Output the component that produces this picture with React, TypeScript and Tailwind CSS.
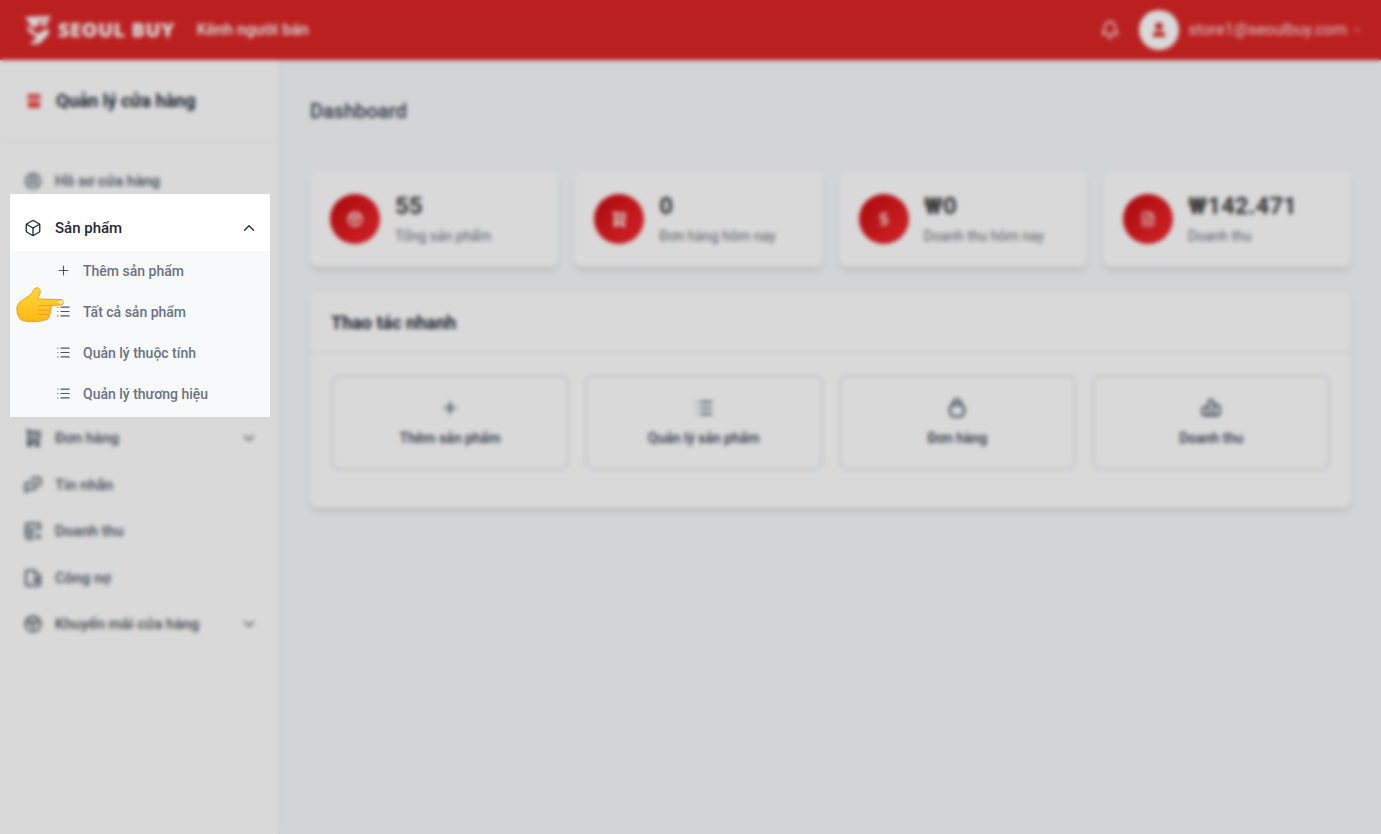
import { Bell, Box, ChevronDown, ChevronUp, CircleUserRound, DollarSign, FileText, List, Plus, User } from "lucide-react";
import type { ComponentType } from "react";

type IconType = ComponentType<{ size?: number; strokeWidth?: number; className?: string }>;

// icons that lucide doesn't have in this shape
const CartBox: IconType = ({ size = 18, className }) => (
  <svg width={size} height={size} viewBox="0 0 18 18" fill="none" stroke="currentColor" strokeWidth="2" className={className}>
    <path d="M2 1.5 H4.5 V13 H15 M4.5 3 H15.5 V9.5 H4.5" />
    <path d="M8 3 V7 M12 3 V7" strokeWidth="1.5" />
    <circle cx="5.5" cy="15.5" r="1.5" fill="currentColor" />
    <circle cx="13.5" cy="15.5" r="1.5" fill="currentColor" />
  </svg>
);

const Chats: IconType = ({ size = 18, className }) => (
  <svg width={size} height={size} viewBox="0 0 18 18" fill="none" stroke="currentColor" strokeWidth="1.8" strokeLinejoin="round" className={className}>
    <path d="M7 2 H16.5 V9 H14" />
    <path d="M1.5 7 H11.5 V13 H5 L1.5 16 Z" />
  </svg>
);

const Sheet: IconType = ({ size = 18, className }) => (
  <svg width={size} height={size} viewBox="0 0 18 18" fill="none" stroke="currentColor" strokeWidth="1.9" strokeLinejoin="round" className={className}>
    <path d="M16 8 V3 Q16 1.5 14.5 1.5 H3.5 Q2 1.5 2 3 V15 Q2 16.5 3.5 16.5 H10" />
    <path d="M2 6.5 H16 M2 11 H11 M7 6.5 V16" strokeWidth="1.5" />
    <rect x="12.5" y="12.5" width="4" height="4" fill="currentColor" stroke="none" />
  </svg>
);

const WalletBox: IconType = ({ size = 18, className }) => (
  <svg width={size} height={size} viewBox="0 0 18 18" fill="none" stroke="currentColor" strokeWidth="2" strokeLinejoin="round" className={className}>
    <path d="M11 1.5 H3.5 Q2 1.5 2 3 V15 Q2 16.5 3.5 16.5 H14.5 Q16 16.5 16 15 V7 Q16 5.5 14.5 5.5 H11 Z" />
    <rect x="9.5" y="9" width="5" height="4" fill="currentColor" stroke="none" />
  </svg>
);

const PromoGlobe: IconType = ({ size = 18, className }) => (
  <svg width={size} height={size} viewBox="0 0 18 18" fill="none" stroke="currentColor" strokeWidth="1.9" className={className}>
    <circle cx="9" cy="9" r="7.5" />
    <path d="M2 7 L9 10 L16 6 M9 10 V16.5 M5 3 L9 10 L13 2.5" strokeWidth="1.4" />
  </svg>
);

const StoreFilled: IconType = ({ size = 16, className }) => (
  <svg width={size} height={size} viewBox="0 0 16 16" fill="currentColor" className={className}>
    <path d="M2 1 H14 L15 5 Q15 7 13 7 H3 Q1 7 1 5 Z" />
    <path d="M2 8.5 H14 V15 H2 Z" />
    <path d="M1 5.5 H15" stroke="#fff" strokeWidth="0.8" />
  </svg>
);

const Bag: IconType = ({ size = 20, className }) => (
  <svg width={size} height={size} viewBox="0 0 20 20" fill="none" stroke="currentColor" strokeWidth="2" strokeLinejoin="round" className={className}>
    <path d="M6 6 Q10 8.5 14 6 L16.5 9 Q17.5 10.5 17 14 Q16.5 18.5 13 18.5 H7 Q3.5 18.5 3 14 Q2.5 10.5 3.5 9 Z" />
    <path d="M6.5 6 Q6.5 1.5 10 1.5 Q13.5 1.5 13.5 6" />
  </svg>
);

const Revenue: IconType = ({ size = 22, className }) => (
  <svg width={size} height={size} viewBox="0 0 22 22" fill="none" stroke="currentColor" strokeWidth="2" strokeLinejoin="round" className={className}>
    <path d="M8 10 V5 Q8 2 11 2 Q14 2 14 5 V8 H18 Q20.5 8 20.5 10.5 V17 Q20.5 19 18.5 19 H3.5 Q1.5 19 1.5 17 V12.5 Q1.5 10 4 10 Z" />
    <path d="M8 10 V19 M14 8 V19" />
  </svg>
);

const subItems = [
  { label: "Thêm sản phẩm", icon: Plus },
  { label: "Tất cả sản phẩm", icon: List },
  { label: "Quản lý thuộc tính", icon: List },
  { label: "Quản lý thương hiệu", icon: List },
];

const stats: { value: string; label: string; icon: IconType }[] = [
  { value: "55", label: "Tổng sản phẩm", icon: PromoGlobe },
  { value: "0", label: "Đơn hàng hôm nay", icon: CartBox },
  { value: "₩0", label: "Doanh thu hôm nay", icon: DollarSign },
  { value: "₩142.471", label: "Doanh thu", icon: FileText },
];

const actions: { label: string; icon: IconType }[] = [
  { label: "Thêm sản phẩm", icon: Plus },
  { label: "Quản lý sản phẩm", icon: List },
  { label: "Đơn hàng", icon: Bag },
  { label: "Doanh thu", icon: Revenue },
];

function Logo() {
  return (
    <svg width="28" height="30" viewBox="0 0 28 30" fill="#fff">
      <path d="M1 2 L27 1 L24 6 L15 6 L14 11 L9 13 Z" />
      <path d="M17 7 L25 7 L22 11 L16 11 Z" />
      <path d="M3 10 L13 19 L24 13 L25 19 L15 29 L5 29 L13 23 L4 16 Z" />
    </svg>
  );
}

function MenuRow({ label, icon: Icon, arrow }: { label: string; icon: IconType; arrow?: boolean }) {
  return (
    <div className="mx-[10px] flex h-[46.5px] items-center pl-[14px] pr-[11px] text-[#4b5563]">
      <Icon size={18} strokeWidth={2} className="mr-[13px] shrink-0" />
      <span className="flex-1 text-[15px] font-medium">{label}</span>
      {arrow && <ChevronDown size={18} />}
    </div>
  );
}

function ProductMenu() {
  return (
    <>
      <div className="flex h-[46px] items-center pl-[14px] pr-[12px] text-[#1f2937]">
        <Box size={18} strokeWidth={1.75} className="mr-[13px] shrink-0" />
        <span className="flex-1 text-[15px] font-medium">Sản phẩm</span>
        <ChevronUp size={18} strokeWidth={1.75} />
      </div>
      <div className="flow-root bg-[#f8f9fb] pb-[3px] pl-[46px]">
        <div className="-mt-[1px]">
          {subItems.map((item) => (
            <div key={item.label} className="flex h-[41px] items-center text-[#6b7280]">
              <item.icon size={15} strokeWidth={1.75} className="mr-[12px] shrink-0 text-[#4b5563]" />
              <span className="text-sm font-medium">{item.label}</span>
            </div>
          ))}
        </div>
      </div>
    </>
  );
}

// pointing hand, same look as the emoji in the tour step
function PointingHand() {
  return (
    <svg width="50" height="38" viewBox="0 0 50 38" className="absolute left-[5px] top-[92px]">
      <defs>
        <linearGradient id="hand" x1="0" y1="0" x2="0" y2="1">
          <stop offset="0" stopColor="#ffd83a" />
          <stop offset="1" stopColor="#fdb813" />
        </linearGradient>
      </defs>
      <path
        d="M2 21 C3 15 11 13 16 8 C18 6 18 3 21 2 C24 1 26 4 25 7 C24.5 9.5 23.5 11 22.5 13 L46 13.5 C49.5 14 49.5 18.5 46 19 L35 19.5 C37 20 37 23.5 35 24 C36.5 25 36 28 34 28.5 C35 30 34 33 31.5 33.5 C26 35.5 14 36.5 8 34.5 C3 33 1.5 27 2 21 Z"
        fill="url(#hand)"
        stroke="#f39a2b"
        strokeWidth="1"
        strokeLinejoin="round"
      />
      <path d="M24 19.5 L35 19.5 M23 24 L35 24 M23 28.5 L34 28.5" stroke="#f39a2b" strokeWidth="1" strokeLinecap="round" />
      <ellipse cx="46" cy="16" rx="2.6" ry="1.7" fill="#ffe7a8" />
    </svg>
  );
}

export default function App() {
  return (
    <div className="relative flex h-[834px] flex-col overflow-hidden bg-[#f8f9fc] font-['Roboto',sans-serif]">
      <header className="flex h-[60px] shrink-0 items-center bg-[#dc2626] pl-[24px] pr-[18px] text-white shadow-sm">
        <Logo />
        <span className="ml-[6px] font-['Open_Sans',sans-serif] text-[20px] font-extrabold tracking-[0.5px]">SEOUL BUY</span>
        <span className="ml-[22px] text-base font-medium">Kênh người bán</span>
        <Bell size={20} className="ml-auto" />
        <div className="ml-[19px] flex h-10 w-10 items-center justify-center rounded-full bg-white text-[#dc2626]">
          <User size={18} fill="#dc2626" />
        </div>
        <span className="ml-[10px] text-base text-white/85">store1@seoulbuy.com</span>
        <ChevronDown size={12} className="ml-[4px] text-white/85" />
      </header>

      <div className="flex min-h-0 flex-1">
        <aside className="w-[280px] shrink-0 border-r border-[#e5e7eb] bg-white">
          <div className="flex h-[81px] items-center border-b border-[#e5e7eb] pl-[26px] pt-[1px]">
            <StoreFilled size={16} className="mr-[14px] text-[#ef4444]" />
            <span className="text-lg font-bold text-[#1f2937]">Quản lý cửa hàng</span>
          </div>
          <nav className="pt-[17px]">
            <MenuRow label="Hồ sơ cửa hàng" icon={CircleUserRound} />
            <div className="mx-[10px] -mb-[1.5px]">
              <ProductMenu />
            </div>
            <MenuRow label="Đơn hàng" icon={CartBox} arrow />
            <MenuRow label="Tin nhắn" icon={Chats} />
            <MenuRow label="Doanh thu" icon={Sheet} />
            <MenuRow label="Công nợ" icon={WalletBox} />
            <MenuRow label="Khuyến mãi cửa hàng" icon={PromoGlobe} arrow />
          </nav>
        </aside>

        <main className="min-w-0 flex-1 px-[30px] pt-[37px]">
          <h1 className="h-[28px] text-xl leading-[28px] font-medium text-[#374151]">Dashboard</h1>
          <div className="mt-[46px] grid grid-cols-4 gap-4">
            {stats.map((s) => (
              <div key={s.label} className="flex h-[96px] items-center rounded-lg bg-white px-5 shadow-md">
                <div className="flex h-[50px] w-[50px] shrink-0 items-center justify-center rounded-full bg-linear-to-br from-[#c8070d] to-[#f62a2f] text-white">
                  <s.icon size={16} />
                </div>
                <div className="ml-[15px] -mt-[2px]">
                  <div className="text-2xl leading-[32px] font-bold text-[#404040]">{s.value}</div>
                  <div className="mt-[4px] text-sm leading-[20px] text-[#6b7280]">{s.label}</div>
                </div>
              </div>
            ))}
          </div>

          <section className="mt-[25px] h-[216px] rounded-lg bg-white shadow-md">
            <div className="flex h-[61px] items-center border-b border-[#e5e7eb] px-[21px] pt-[1px]">
              <h2 className="text-lg font-bold text-[#1f2937]">Thao tác nhanh</h2>
            </div>
            <div className="grid grid-cols-4 gap-4 px-[21px] pt-[22px]">
              {actions.map((a) => (
                <div key={a.label} className="flex h-[95px] flex-col items-center rounded-lg border-2 border-[#e5e7eb] pt-[21px]">
                  <span className="flex h-5 items-center">
                    <a.icon size={20} strokeWidth={2} className="text-[#374151]" />
                  </span>
                  <span className="mt-[10px] text-sm font-medium text-[#374151]">{a.label}</span>
                </div>
              ))}
            </div>
          </section>
        </main>
      </div>

      {/* Tour overlay */}
      <div className="absolute inset-0 bg-black/15 backdrop-blur-[2px]" />

      {/* Highlighted step */}
      <div className="absolute left-[10px] top-[194px] w-[260px] bg-white pt-[11px]">
        <ProductMenu />
        <PointingHand />
      </div>
    </div>
  );
}
